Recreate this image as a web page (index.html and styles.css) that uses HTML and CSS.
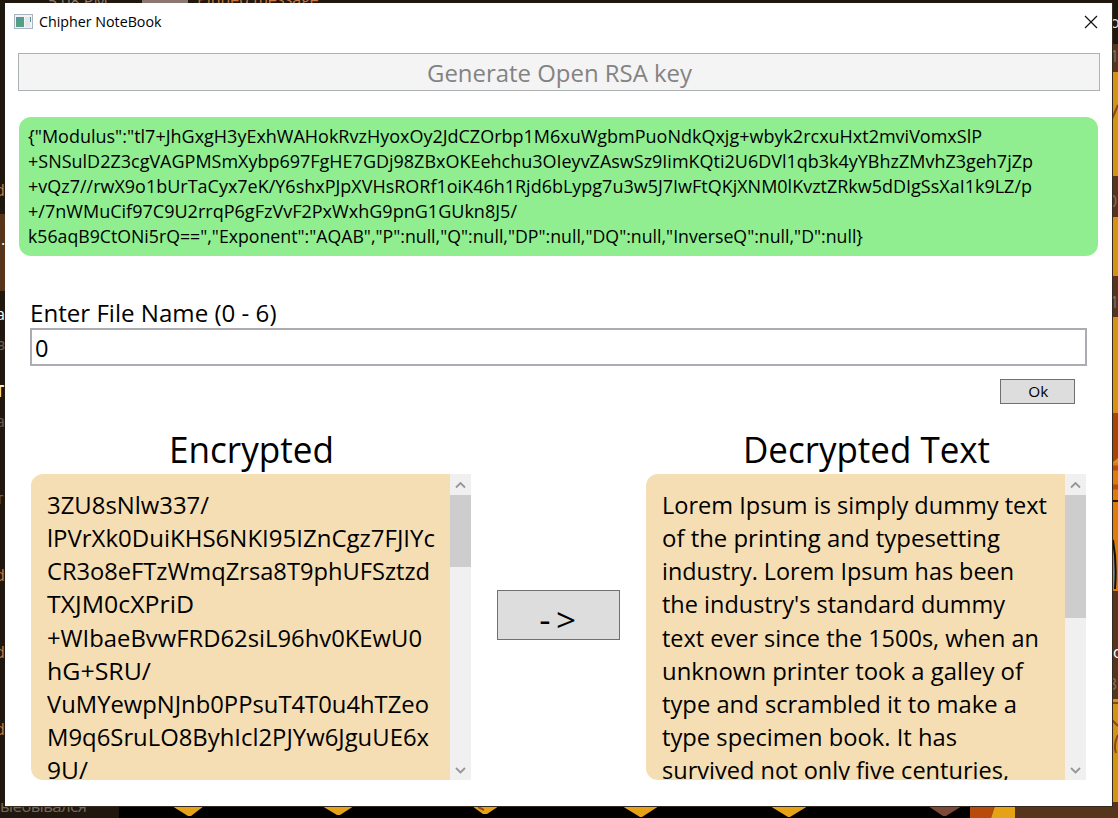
FILE: index.html
```html
<!DOCTYPE html>
<html lang="en">
<head>
<meta charset="utf-8">
<title>Chipher NoteBook</title>
<link rel="stylesheet" href="styles.css">
</head>
<body>
<svg class="desktop" width="1118" height="818" viewBox="0 0 1118 818" aria-hidden="true">
  <rect width="1118" height="818" fill="#20170f"/>
  <rect y="214" x="0" width="5" height="77" fill="#56351a"/>
  <rect x="142" width="46" height="3" fill="#8b7670"/>
  <g class="behind">
    <text x="48" y="7" fill="#8b7d6f">5:08 PM</text>
    <text x="197" y="5" fill="#c97843">Pinned message</text>
    <text x="0" y="812" fill="#766759" textLength="87" font-size="17">ыебывался</text>
    <text x="-4" y="320" fill="#fff">a</text>
    <text x="-4" y="350" fill="#6b5d51">в</text>
    <text x="-5" y="397" fill="#ffe9c5" font-weight="700">Т</text>
    <text x="-4" y="427" fill="#6b5d51">а</text>
    <text x="-4" y="504" fill="#6b5d51">т</text>
    <text x="-5" y="196" fill="#c97843">d</text>
    <text x="-5" y="581" fill="#c97843">d</text>
    <text x="-5" y="658" fill="#c97843">d</text>
    <text x="-5" y="735" fill="#c97843">d</text>
    <text x="1" y="245" fill="#fff">.</text>
  </g>
  <rect x="119" y="806" width="851" height="12" fill="#000"/>
  <g fill="#e5a216">
    <path d="M172 806h32l-13 10h-3zM322 806h32l-14 9h-3zM472 806h27l-12 8h-4zM622 806h37l-17 11h-2zM770 806h38l-18 11h-2z"/>
    <path fill="#7b4938" d="M928 806h34l-16 10h-3z"/>
    <path fill="#b84b0b" d="M970 806h25l-4 12h-21z"/>
    <path d="M995 806h20v12h-24z"/>
  </g>
  <path d="M478 807l6 3" stroke="#9b4b14" stroke-width="2"/>
  <rect x="1015" y="806" width="103" height="12" fill="#56351c"/>
  <g>
    <rect x="1112" y="44" width="6" height="762" fill="#57341c"/>
    <rect x="1112" y="72" width="6" height="104" fill="#d49412"/>
    <rect x="1112" y="217" width="6" height="59" fill="#d49412"/>
    <rect x="1112" y="317" width="6" height="146" fill="#d49412"/>
    <path fill="#a94405" d="M1112 413h6v45l-6 5z"/>
    <rect x="1112" y="463" width="6" height="128" fill="#df7c07"/>
    <path d="M1112 468h6M1112 487h6" stroke="#b84b0b" stroke-width="5"/>
    <path d="M1112 501h6" stroke="#21170b" stroke-width="2"/>
    <path d="M1112 540q5 20 3 50h-3z" fill="#80909b"/>
    <path d="M1113 540q4 23 2 49" fill="none" stroke="#111" stroke-width="2"/>
    <rect x="1112" y="699" width="6" height="103" fill="#d49412"/>
    <path d="M1112 119l6-14M1112 720l6 6M1118 735q-5 10-2 18M1112 703h6" fill="none" stroke="#8a4711" stroke-width="2"/>
  </g>
  <g class="behind">
    <text x="1110" y="28" fill="#ddd">o</text>
    <text x="1110" y="62" fill="#88705e">15</text>
    <text x="1108" y="207" fill="#88705e">07</text>
    <text x="1110" y="308" fill="#88705e">12</text>
    <text x="1113" y="658" fill="#fff">o</text>
    <text x="1108" y="690" fill="#88705e">35</text>
  </g>
  <path d="M1112.500 3V806.500M5 806.500H1113" stroke="#33291e" fill="none"/>
</svg>

<main class="window">
  <header class="titlebar">
    <svg class="app-icon" width="19" height="15" viewBox="0 0 19 15">
      <rect x=".5" y=".5" width="18" height="14" fill="#f1f3f5" stroke="#a9b3c1"/>
      <rect x="2" y="3" width="8" height="10" fill="#5596a0"/>
      <path d="M2 13V8l8-5v10z" fill="#55a083"/>
      <rect x="11" y="3" width="5" height="10" fill="#e5e7ec"/>
      <path d="M16.500 3v5" stroke="#55968f"/>
    </svg>
    <h1 class="title"><span class="fit" data-width="122.5">Chipher NoteBook</span></h1>
    <svg class="close" width="14" height="14" viewBox="0 0 14 14"><path d="M1 1l12 12M13 1L1 13" stroke="#111" stroke-width="1.200"/></svg>
  </header>

  <button class="generate" disabled><span class="fit" data-width="265">Generate Open RSA key</span></button>

  <section class="key">
    <span class="fit" data-width="954">{"Modulus":"tl7+JhGxgH3yExhWAHokRvzHyoxOy2JdCZOrbp1M6xuWgbmPuoNdkQxjg+wbyk2rcxuHxt2mviVomxSlP</span>
    <span class="fit" data-width="1005">+SNSulD2Z3cgVAGPMSmXybp697FgHE7GDj98ZBxOKEehchu3OIeyvZAswSz9IimKQti2U6DVl1qb3k4yYBhzZMvhZ3geh7jZp</span>
    <span class="fit" data-width="1004">+vQz7//rwX9o1bUrTaCyx7eK/Y6shxPJpXVHsRORf1oiK46h1Rjd6bLypg7u3w5J7IwFtQKjXNM0lKvztZRkw5dDIgSsXaI1k9LZ/p</span>
    <span class="fit" data-width="489">+/7nWMuCif97C9U2rrqP6gFzVvF2PxWxhG9pnG1GUkn8J5/</span>
    <span class="fit" data-width="835">k56aqB9CtONi5rQ==","Exponent":"AQAB","P":null,"Q":null,"DP":null,"DQ":null,"InverseQ":null,"D":null}</span>
  </section>

  <section class="file">
    <label class="file-label" for="name"><span class="fit" data-width="246.500">Enter File Name (0 - 6)</span></label>
    <div class="file-input" id="name"><span class="fit" data-width="13.500">0</span></div>
    <button class="ok"><span class="fit" data-width="20">Ok</span></button>
  </section>

  <section class="panels">
    <div class="panel">
      <h2 class="heading"><span class="fit" data-width="165">Encrypted</span></h2>
      <div class="scroll">
        <div class="text">
          <span class="fit" data-width="162">3ZU8sNlw337/</span>
          <span class="fit" data-width="388">lPVrXk0DuiKHS6NKI95IZnCgz7FJIYc</span>
          <span class="fit" data-width="383">CR3o8eFTzWmqZrsa8T9phUFSztzd</span>
          <span class="fit" data-width="147">TXJM0cXPriD</span>
          <span class="fit" data-width="375">+WIbaeBvwFRD62siL96hv0KEwU0</span>
          <span class="fit" data-width="104">hG+SRU/</span>
          <span class="fit" data-width="382">VuMYewpNJnb0PPsuT4T0u4hTZeo</span>
          <span class="fit" data-width="382">M9q6SruLO8ByhIcl2PJYw6JguUE6x</span>
          <span class="fit" data-width="41">9U/</span>
        </div>
        <div class="bar">
          <svg class="arrow" viewBox="0 0 21 21"><path d="M6 13.500l4.500-4.500 4.500 4.500"/></svg>
          <div class="thumb"></div>
          <svg class="arrow down" viewBox="0 0 21 21"><path d="M6 9l4.500 4.500L15 9"/></svg>
        </div>
      </div>
    </div>
    <button class="convert"><span class="fit" data-width="42">-&gt;</span></button>
    <div class="panel">
      <h2 class="heading"><span class="fit" data-width="247">Decrypted Text</span></h2>
      <div class="scroll">
        <div class="text">
          <span class="fit" data-width="385">Lorem Ipsum is simply dummy text</span>
          <span class="fit" data-width="338">of the printing and typesetting</span>
          <span class="fit" data-width="352">industry. Lorem Ipsum has been</span>
          <span class="fit" data-width="343">the industry's standard dummy</span>
          <span class="fit" data-width="377">text ever since the 1500s, when an</span>
          <span class="fit" data-width="361">unknown printer took a galley of</span>
          <span class="fit" data-width="355">type and scrambled it to make a</span>
          <span class="fit" data-width="295">type specimen book. It has</span>
          <span class="fit" data-width="347">survived not only five centuries,</span>
        </div>
        <div class="bar">
          <svg class="arrow" viewBox="0 0 21 21"><path d="M6 13.500l4.500-4.500 4.500 4.500"/></svg>
          <div class="thumb tall"></div>
          <svg class="arrow down" viewBox="0 0 21 21"><path d="M6 9l4.500 4.500L15 9"/></svg>
        </div>
      </div>
    </div>
  </section>
</main>
<script src="fit.js"></script>
</body>
</html>
```
FILE: styles.css
```css
* { box-sizing: border-box; }
body {
  margin: 0;
  width: 1118px;
  height: 818px;
  overflow: hidden;
  padding: 3px 6px 12px 5px;
  font-family: "Open Sans", "Noto Sans", sans-serif;
  color: #000;
}
.desktop { position: absolute; left: 0; top: 0; z-index: -1; }
.behind { font: 16px "Open Sans", sans-serif; }
.window {
  display: flex;
  flex-direction: column;
  width: 1107px;
  height: 803px;
  background: #fff;
}
.fit {
  display: block;
  width: max-content;
  white-space: pre;
  transform-origin: left center;
}
.titlebar {
  display: flex;
  align-items: center;
  height: 37px;
  padding: 0 14px 0 9px;
}
.title { flex: 1; margin: 0 0 0 6px; font-size: 15px; font-weight: 400; line-height: 37px; }
button {
  display: flex;
  align-items: center;
  justify-content: center;
  padding: 0;
  border: 1px solid #707070;
  border-radius: 0;
  background: #ddd;
  color: #000;
  font-family: inherit;
}
.generate {
  flex: none;
  width: 1082px;
  height: 38px;
  margin: 13px 0 0 13px;
  padding-top: 2px;
  border-color: #adb2b5;
  background: #f4f4f4;
  color: #838383;
  font-size: 24.500px;
  line-height: 34px;
}
.key {
  flex: none;
  width: 1079px;
  height: 139px;
  margin: 26px 0 0 14px;
  padding: 6px 9px;
  border-radius: 12px;
  background: #90ee90;
  font-size: 18.500px;
  line-height: 25px;
}
.file { display: flex; flex-direction: column; width: 1057px; margin: 40px 0 0 25px; }
.file-label { height: 32px; font-size: 24.500px; line-height: 33px; }
.file-input {
  height: 38px;
  padding-left: 3px;
  border: 2px solid #abadb3;
  font-size: 24.500px;
  line-height: 36px;
}
.ok {
  align-self: flex-end;
  width: 75px;
  height: 25px;
  margin: 13px 12px 0 0;
  padding-bottom: 2px;
  font-size: 15px;
}
.panels { display: flex; padding: 24px 0 0 26px; }
.panel { width: 440px; }
.heading {
  display: flex;
  justify-content: center;
  height: 46px;
  margin: 0;
  font-size: 37px;
  font-weight: 400;
  line-height: 42px;
}
.scroll {
  display: flex;
  height: 306px;
  overflow: hidden;
  border-radius: 12px 0 0 12px;
  background: #f5deb3;
}
.text {
  flex: 1;
  min-width: 0;
  padding: 14px 0 0 15.500px;
  font-size: 24.500px;
  line-height: 33.150px;
}
.bar { display: flex; flex-direction: column; width: 21px; background: #f0f0f0; }
.arrow { width: 21px; height: 21px; fill: none; stroke: #969696; stroke-width: 1.800; }
.down { margin-top: auto; }
.thumb { height: 72px; background: #cdcdcd; }
.tall { height: 123px; }
.convert {
  width: 123px;
  height: 50px;
  margin: 162px 26px 0 26px;
  padding-top: 10px;
  font-size: 33px;
  letter-spacing: 5px;
  line-height: 40px;
}
```
FILE: fit.js
```js
// Condenses every text run to its nominal width, keeping layout and drawing in step.
document.querySelectorAll(".fit").forEach(function (el) {
  var natural = el.getBoundingClientRect().width;
  var wanted = Number(el.dataset.width);
  el.style.width = wanted + "px";
  el.style.transform = "scaleX(" + wanted / natural + ")";
  el.style.transformOrigin = "left center";
});
```
